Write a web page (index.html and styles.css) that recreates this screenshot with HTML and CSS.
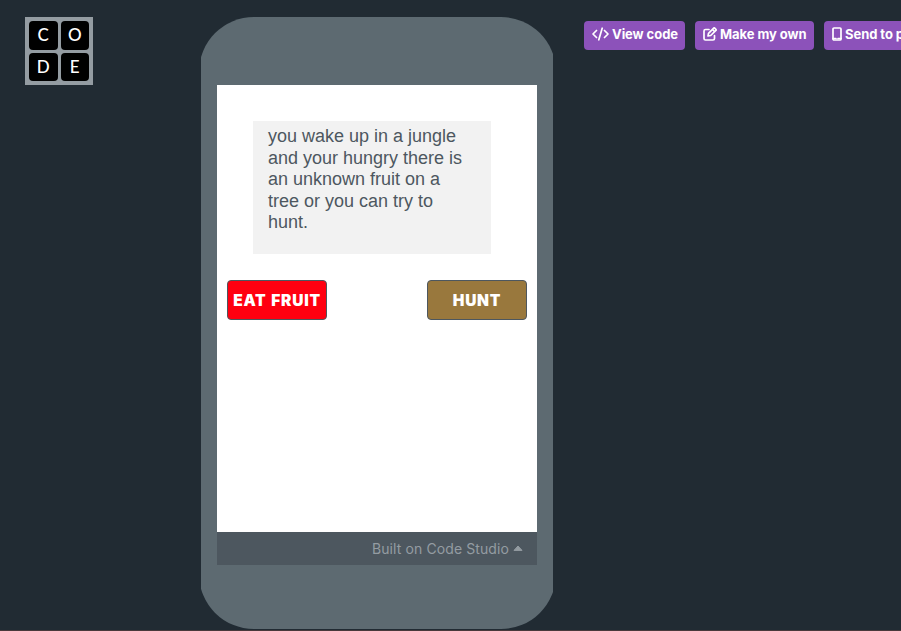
FILE: index.html
```html
<!DOCTYPE html>
<html lang="en">
<head>
<meta charset="utf-8">
<title>Code Studio</title>
<link rel="stylesheet" href="styles.css">
</head>
<body>
<div class="page">
  <a class="logo"><span>C</span><span>O</span><span>D</span><span>E</span></a>
  <main class="phone">
    <div class="shell">
      <div class="screen">
        <p class="story">you wake up in a jungle and your hungry there is an unknown fruit on a tree or you can try to hunt.</p>
        <div class="choices">
          <button class="choice eat">EAT FRUIT</button>
          <button class="choice hunt">HUNT</button>
        </div>
      </div>
      <footer class="footer"><span class="built">Built on Code Studio</span><svg width="10" height="6" viewBox="0 0 10 6"><path d="M1 5.400h8L5 1z" fill="currentColor" stroke="currentColor" stroke-linejoin="round"/></svg></footer>
    </div>
  </main>
  <nav class="actions">
    <a class="action view"><svg width="17" height="14" viewBox="0 0 17 14"><path d="M4.500 3.500 1 7l3.500 3.500M12.500 3.500 16 7l-3.500 3.500M10.200 1.200 6.800 12.800"/></svg><span>View code</span></a>
    <a class="action make"><svg width="14" height="14" viewBox="0 0 14 14"><path d="M6 2.500H2.500Q1 2.500 1 4v7.500Q1 13 2.500 13H10q1.500 0 1.500-1.500V8.500M5 9l.5-2.700L10.700 1.100q.5-.5 1 0l1.200 1.200q.5.5 0 1L7.700 8.500zM9.500 2.500l2 2"/></svg><span>Make my own</span></a>
    <a class="action send"><svg width="10" height="14" viewBox="0 0 10 14"><rect x="1" y="1" width="8" height="12" rx="1"/><path d="M1 11.500h3M6 11.500h3"/></svg><span>Send to phone</span></a>
  </nav>
</div>
</body>
</html>
```
FILE: styles.css
```css
* { box-sizing: border-box; }
body { margin: 0; background: #212b33; font-family: Inter, sans-serif; overflow: hidden; }
.page { height: 631px; display: flex; align-items: flex-start; padding: 17px 0 0 25px; border-bottom: 1px solid #49393b; overflow: hidden; }
.logo { width: 68px; height: 68px; flex: none; margin-right: 108px; padding: 4px; background: #949ca2; display: grid; grid-template-columns: 28.5px 28.5px; grid-template-rows: 28.5px 28.5px; gap: 3px; }
.logo span { background: #000; color: #fff; border-radius: 4px; font: 500 17px/27px Lato, sans-serif; text-align: center; }
.phone { width: 352px; height: 612px; flex: none; overflow: hidden; }
.shell { width: 357px; height: 612px; margin-left: -2.5px; border-radius: 55px; background: #5d6a71; padding: 68px 18.5px 0; }
.screen { height: 447px; background: #fff; padding-top: 36px; }
.story { width: 238px; height: 133px; margin: 0 0 26px 36px; padding: 5px 15px 0; background: #f2f2f2; color: #4d5760; font: 18px/21.6px "Liberation Sans", sans-serif; }
.choices { display: flex; justify-content: space-between; padding: 0 10px; }
.choice { width: 100px; height: 40px; padding: 1px 0 0; border: 1px solid #4d575f; border-radius: 4px; color: #fff; font: 900 15.5px/37px Inter, sans-serif; letter-spacing: .75px; word-spacing: 1px; white-space: nowrap; }
.eat { background: #ff0010; }
.hunt { background: #99783d; }
.footer { height: 33px; background: #4d575f; color: #949ca2; display: flex; justify-content: flex-end; align-items: center; gap: 4px; padding-right: 14px; font-size: 14px; }
.built { letter-spacing: .1px; }
.footer svg { position: relative; top: -1px; }
.actions { display: flex; gap: 10px; margin: 4px 0 0 31px; flex: none; }
.action { height: 29px; display: flex; flex: none; align-items: center; padding: 0 8px; gap: 3px; border-radius: 4px; background: #8c52ba; color: #fff; font-size: 13px; font-weight: 700; letter-spacing: -.06px; white-space: nowrap; }
.action span { position: relative; top: -2px; }
.action svg { fill: none; stroke: #fff; stroke-width: 1.7; stroke-linecap: round; stroke-linejoin: round; flex: none; margin-top: -3px; }
.view { width: 101px; }
.make { width: 119px; }
.send { width: 130px; }
```
